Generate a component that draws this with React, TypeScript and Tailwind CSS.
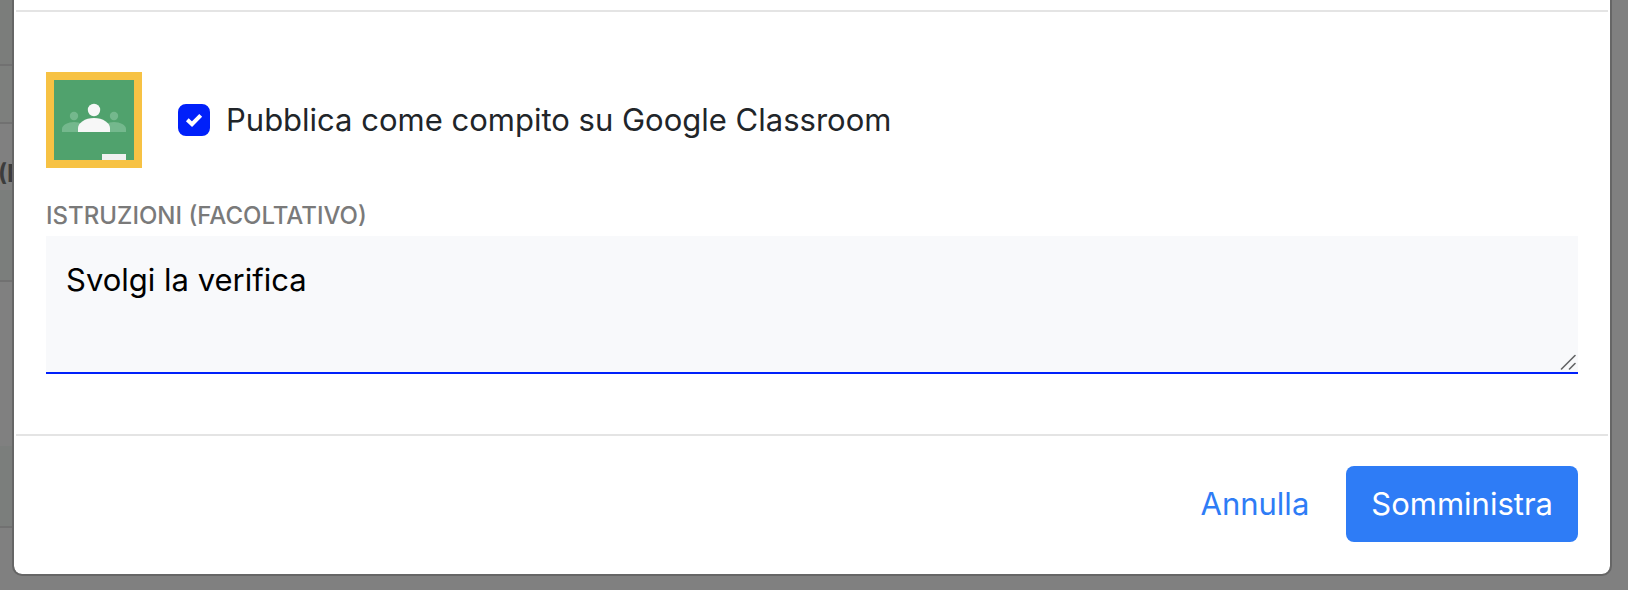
import { useState } from "react";

function ClassroomLogo() {
  return (
    <svg viewBox="0 0 96 96" className="size-24 shrink-0" role="img" aria-label="Google Classroom">
      <rect width="96" height="96" fill="#f7c244" />
      <rect x="8" y="8" width="80" height="80" fill="#50a26d" />
      <g fill="#74b88d">
        <circle cx="28" cy="44" r="4.2" />
        <circle cx="68" cy="44" r="4.2" />
        <path d="M16 60v-3c0-4 6-7 12-7s12 3 12 7v3z" />
        <path d="M56 60v-3c0-4 6-7 12-7s12 3 12 7v3z" />
      </g>
      <g fill="#f7f7f7">
        <circle cx="48" cy="38" r="6.2" />
        <path d="M32 60v-4c0-5 7-10 16-10s16 5 16 10v4z" />
      </g>
      <rect x="56" y="82" width="24" height="6" fill="#f1f1f1" />
    </svg>
  );
}

function Backdrop() {
  return (
    <div className="absolute inset-0 -z-10 bg-[#808080]" aria-hidden="true">
      <div className="flex h-full w-3 flex-col overflow-hidden">
        <div className="h-16 shrink-0 bg-[#7b7d7b]" />
        <div className="h-15 shrink-0 border-y-2 border-[#717171] bg-[#7d7f7d]" />
        <div className="-ml-0.5 flex h-[66px] shrink-0 items-end text-2xl font-bold text-[#3c3c3c]">(M</div>
        <div className="h-23 shrink-0 border-b-2 border-[#717171] bg-[#7b7e7c]" />
        <div className="h-41 shrink-0" />
        <div className="h-[82px] shrink-0 border-b-2 border-[#717171] bg-[#7b7e7c]" />
      </div>
    </div>
  );
}

export default function App() {
  const [pubblica, setPubblica] = useState(true);
  const [istruzioni, setIstruzioni] = useState("Svolgi la verifica");

  return (
    <main className="relative isolate overflow-hidden pr-4 pb-3.5 pl-3 font-['Inter',sans-serif]">
      <Backdrop />

      <form
        role="dialog"
        aria-label="Somministra verifica"
        onSubmit={(e) => e.preventDefault()}
        className="rounded-b-[10px] border-2 border-t-0 border-[#666666] bg-white bg-clip-padding px-0.5 pt-2.5"
      >
        <div className="border-y-2 border-[#e4e4e4] px-[30px] pt-15 pb-15">
          <div className="flex items-center gap-9">
            <ClassroomLogo />
            <label className="flex items-center gap-4 text-[31px] leading-12 text-[#212529]">
              <span className="relative flex size-8 shrink-0">
                <input
                  type="checkbox"
                  checked={pubblica}
                  onChange={(e) => setPubblica(e.target.checked)}
                  className="peer size-8 appearance-none rounded-lg border-2 border-[#0020fa] checked:bg-[#0020fa]"
                />
                <svg
                  viewBox="0 0 32 32"
                  className="pointer-events-none absolute inset-0 hidden peer-checked:block"
                  fill="none"
                  stroke="#fff"
                  strokeWidth="4"
                >
                  <path d="M9.3 15.8l4.7 4.4 8.7-8.9" />
                </svg>
              </span>
              Pubblica come compito su Google Classroom
            </label>
          </div>

          <label htmlFor="istruzioni" className="mt-8 mb-1 block text-2xl leading-8 font-medium text-[#7a7a7a] uppercase">
            Istruzioni (facoltativo)
          </label>
          <div className="relative">
            <textarea
              id="istruzioni"
              value={istruzioni}
              onChange={(e) => setIstruzioni(e.target.value)}
              className="block h-[138px] w-full resize-y border-b-2 border-[#0020fa] bg-[#f8f9fb] p-5 text-[31px] leading-12 text-black outline-none [&::-webkit-resizer]:bg-transparent"
            />
            <svg
              viewBox="0 0 16 16"
              className="pointer-events-none absolute right-0.5 bottom-1 size-4"
              stroke="#636466"
              strokeWidth="1.6"
              strokeLinecap="round"
            >
              <path d="M1.5 15L15 1.5M9.5 15L15 9.5" />
            </svg>
          </div>
        </div>

        <div className="flex items-center justify-end gap-3 px-[30px] pt-[30px] pb-8 text-[31px] leading-12">
          <button type="button" className="rounded-lg px-[25px] py-3.5 text-[#2e7cf6]">
            Annulla
          </button>
          <button type="submit" className="rounded-lg bg-[#2e7cf6] px-[25px] py-3.5 text-white">
            Somministra
          </button>
        </div>
      </form>
    </main>
  );
}
